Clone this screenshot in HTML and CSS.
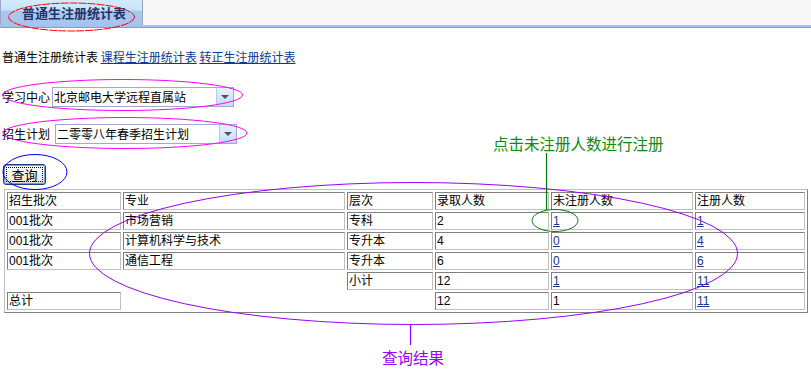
FILE: index.html
```html
<!DOCTYPE html>
<html>
<head>
<meta charset="utf-8">
<link rel="stylesheet" href="styles.css">
</head>
<body>
<div class="topbar">
  <div class="tab">普通生注册统计表</div>
</div>
<div class="links">普通生注册统计表 <a href="#">课程生注册统计表</a> <a href="#">转正生注册统计表</a></div>
<div class="field f1"><span class="label">学习中心</span><div class="select s1"><span class="val">北京邮电大学远程直属站</span><span class="arrow"></span></div></div>
<div class="field f2"><span class="label">招生计划</span><div class="select s2"><span class="val">二零零八年春季招生计划</span><span class="arrow"></span></div></div>
<div class="btnrow"><button class="btn"><span class="focus">查询</span></button></div>
<table class="grid">
  <tr><td class="c1">招生批次</td><td class="c2">专业</td><td class="c3">层次</td><td class="c4">录取人数</td><td class="c5">未注册人数</td><td class="c6">注册人数</td></tr>
  <tr><td>001批次</td><td>市场营销</td><td>专科</td><td>2</td><td><a href="#">1</a></td><td><a href="#">1</a></td></tr>
  <tr><td>001批次</td><td>计算机科学与技术</td><td>专升本</td><td>4</td><td><a href="#">0</a></td><td><a href="#">4</a></td></tr>
  <tr><td>001批次</td><td>通信工程</td><td>专升本</td><td>6</td><td><a href="#">0</a></td><td><a href="#">6</a></td></tr>
  <tr><td></td><td></td><td>小计</td><td>12</td><td><a href="#">1</a></td><td><a href="#">11</a></td></tr>
  <tr><td>总计</td><td></td><td></td><td>12</td><td>1</td><td><a href="#">11</a></td></tr>
</table>
<svg class="notes" width="811" height="374" viewBox="0 0 811 374">
  <ellipse cx="71.5" cy="17" rx="63" ry="14" fill="none" stroke="#ff0000" stroke-width="1" stroke-dasharray="8 1"/>
  <ellipse cx="122.5" cy="95" rx="120" ry="15.5" fill="none" stroke="#ff00ff" stroke-width="1"/>
  <ellipse cx="125" cy="133" rx="122" ry="15.5" fill="none" stroke="#ff00ff" stroke-width="1"/>
  <ellipse cx="35" cy="172" rx="32" ry="17.5" fill="none" stroke="#0000ff" stroke-width="1"/>
  <ellipse cx="413.5" cy="253.5" rx="324" ry="71" fill="none" stroke="#9900ff" stroke-width="1"/>
  <line x1="410.5" y1="324" x2="410.5" y2="345" stroke="#9900ff" stroke-width="1.2"/>
  <line x1="546.5" y1="153" x2="546.5" y2="210" stroke="#008000" stroke-width="1.2"/>
  <ellipse cx="555" cy="220.5" rx="23" ry="11" fill="none" stroke="#008000" stroke-width="1"/>
  <text x="493" y="150" class="green">点击未注册人数进行注册</text>
  <text x="382" y="364" class="purple">查询结果</text>
</svg>
</body>
</html>
```
FILE: styles.css
```css
html, body {
  margin: 0;
  padding: 0;
  background: #ffffff;
}
body {
  position: relative;
  width: 811px;
  height: 374px;
  overflow: hidden;
  font-family: "Noto Sans CJK SC", "Liberation Sans", sans-serif;
  font-size: 12px;
  color: #000;
}
.topbar {
  height: 25px;
  background: #f7f7f7;
  border-bottom: 2px solid #a6c0f0;
  box-shadow: 0 1px 0 #8b99cb;
  display: flex;
}
.tab {
  width: 143px;
  height: 25px;
  box-sizing: border-box;
  border-left: 1px solid #9aa6c6;
  border-right: 1px solid #9aa6c6;
  background: linear-gradient(#d2ebfc 0%, #c8e3fa 40%, #a9c8f0 45%, #a6c5ee 100%);
  color: #25336a;
  font-weight: bold;
  font-size: 13px;
  line-height: 25px;
  padding-left: 21px;
}
.links {
  margin-top: 22px;
  padding-left: 2px;
  line-height: 16px;
  height: 16px;
}
.links a {
  color: #0b3a96;
  text-decoration: underline;
}
.field {
  display: flex;
  align-items: center;
  padding-left: 2px;
  height: 20px;
}
.f1 { margin-top: 22px; }
.f2 { margin-top: 17px; }
.label { line-height: 20px; }
.select {
  display: flex;
  height: 20px;
  width: 182px;
  box-sizing: border-box;
  border: 1px solid #a3a8d3;
  background: #fff;
}
.s1 { margin-left: 2px; }
.s2 { margin-left: 5px; }
.val {
  flex: 1;
  line-height: 18px;
  padding-left: 1px;
  white-space: nowrap;
  overflow: hidden;
}
.arrow {
  width: 17px;
  height: 18px;
  box-sizing: border-box;
  border-left: 1px solid #b8cbea;
  background: linear-gradient(#e6f1fd, #c6ddfa);
  position: relative;
}
.arrow::after {
  content: "";
  position: absolute;
  left: 4px;
  top: 7px;
  border-left: 4px solid transparent;
  border-right: 4px solid transparent;
  border-top: 4px solid #4d5361;
}
.btnrow {
  margin-top: 20px;
  padding-left: 3px;
  height: 21px;
}
.btn {
  width: 43px;
  height: 21px;
  margin: 0;
  padding: 2px;
  box-sizing: border-box;
  border: 1px solid #1e3e7e;
  border-radius: 3px;
  background: linear-gradient(#ffffff, #ecebe6 80%, #d6d0c5);
  box-shadow: inset 0 0 0 1px #7b9ad8;
  font-family: "Noto Sans CJK SC", sans-serif;
  font-size: 13px;
  color: #000;
  display: flex;
}
.focus {
  flex: 1;
  border: 1px dotted #000;
  line-height: 13px;
  text-align: center;
}
.grid {
  margin-top: 4px;
  margin-left: 4px;
  width: 802px;
  table-layout: fixed;
  border-collapse: separate;
  border-spacing: 2px;
  border-style: solid;
  border-width: 1px;
  border-color: #c0c0c0 #808080 #808080 #c0c0c0;
  empty-cells: hide;
}
.grid td {
  height: 18px;
  box-sizing: border-box;
  padding: 0 0 0 1px;
  line-height: 16px;
  border-style: solid;
  border-width: 1px;
  border-color: #808080 #c0c0c0 #c0c0c0 #808080;
  white-space: nowrap;
  font-family: "Liberation Sans", "Noto Sans CJK SC", sans-serif;
  font-size: 12px;
}
.grid a {
  color: #13388c;
  text-decoration: underline;
}
.c1 { width: 114px; }
.c2 { width: 222px; }
.c3 { width: 86px; }
.c4 { width: 114px; }
.c5 { width: 142px; }
.c6 { width: 110px; }
.notes {
  position: absolute;
  left: 0;
  top: 0;
  pointer-events: none;
}
.green {
  fill: #108a10;
  font-family: "Noto Sans CJK SC", sans-serif;
  font-size: 15.5px;
}
.purple {
  fill: #9900ff;
  font-family: "Noto Sans CJK SC", sans-serif;
  font-size: 15.5px;
}
```
